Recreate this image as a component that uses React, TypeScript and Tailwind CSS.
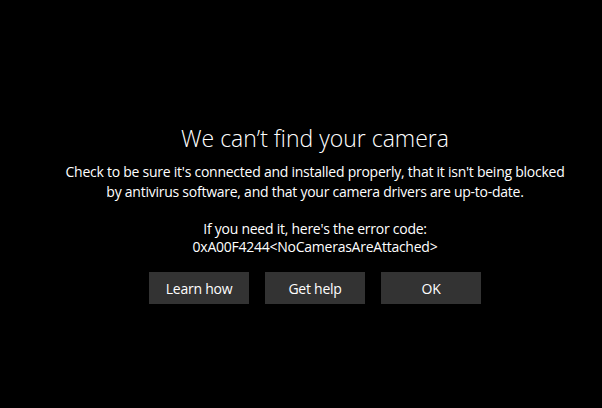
export default function App() {
  const font = { fontFamily: '"Open Sans", "Noto Sans", sans-serif' };
  return (
    <div
      className="w-[602px] h-[408px] bg-black text-white flex flex-col items-center pt-[124px] pl-[28px]"
      style={font}
    >
      <h1 className="text-[23px] leading-[28px] font-light">We can’t find your camera</h1>
      <p className="mt-[10px] text-[14px] leading-[20px] text-center tracking-[-0.25px]">
        Check to be sure it's connected and installed properly, that it isn't being blocked
        <br />
        by antivirus software, and that your camera drivers are up-to-date.
      </p>
      <p className="mt-[18px] text-[14px] leading-[18px] text-center tracking-[-0.25px]">
        If you need it, here's the error code:
        <br />
        0xA00F4244&lt;NoCamerasAreAttached&gt;
      </p>
      <div className="mt-[16px] flex gap-4">
        <button className="w-[100px] h-8 bg-[#333333] text-[14px] tracking-[-0.25px]">Learn how</button>
        <button className="w-[100px] h-8 bg-[#333333] text-[14px] tracking-[-0.25px]">Get help</button>
        <button className="w-[100px] h-8 bg-[#333333] text-[14px] tracking-[-0.25px]">OK</button>
      </div>
    </div>
  );
}
